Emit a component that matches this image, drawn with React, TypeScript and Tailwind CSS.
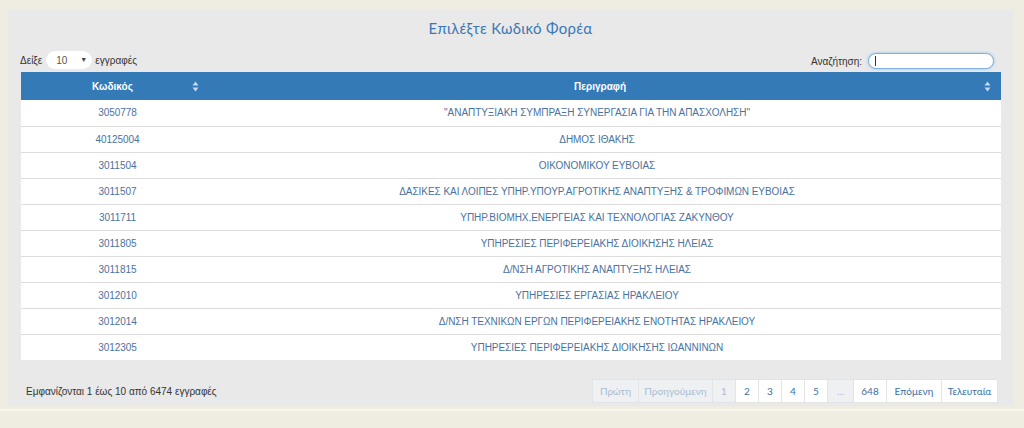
import React from 'react';

const rows: [string, string][] = [
  ['3050778', '"ΑΝΑΠΤΥΞΙΑΚΗ ΣΥΜΠΡΑΞΗ ΣΥΝΕΡΓΑΣΙΑ ΓΙΑ ΤΗΝ ΑΠΑΣΧΟΛΗΣΗ"'],
  ['40125004', 'ΔΗΜΟΣ ΙΘΑΚΗΣ'],
  ['3011504', 'ΟΙΚΟΝΟΜΙΚΟΥ ΕΥΒΟΙΑΣ'],
  ['3011507', 'ΔΑΣΙΚΕΣ ΚΑΙ ΛΟΙΠΕΣ ΥΠΗΡ.ΥΠΟΥΡ.ΑΓΡΟΤΙΚΗΣ ΑΝΑΠΤΥΞΗΣ & ΤΡΟΦΙΜΩΝ ΕΥΒΟΙΑΣ'],
  ['3011711', 'ΥΠΗΡ.ΒΙΟΜΗΧ.ΕΝΕΡΓΕΙΑΣ ΚΑΙ ΤΕΧΝΟΛΟΓΙΑΣ ΖΑΚΥΝΘΟΥ'],
  ['3011805', 'ΥΠΗΡΕΣΙΕΣ ΠΕΡΙΦΕΡΕΙΑΚΗΣ ΔΙΟΙΚΗΣΗΣ ΗΛΕΙΑΣ'],
  ['3011815', 'Δ/ΝΣΗ ΑΓΡΟΤΙΚΗΣ ΑΝΑΠΤΥΞΗΣ ΗΛΕΙΑΣ'],
  ['3012010', 'ΥΠΗΡΕΣΙΕΣ ΕΡΓΑΣΙΑΣ ΗΡΑΚΛΕΙΟΥ'],
  ['3012014', 'Δ/ΝΣΗ ΤΕΧΝΙΚΩΝ ΕΡΓΩΝ ΠΕΡΙΦΕΡΕΙΑΚΗΣ ΕΝΟΤΗΤΑΣ ΗΡΑΚΛΕΙΟΥ'],
  ['3012305', 'ΥΠΗΡΕΣΙΕΣ ΠΕΡΙΦΕΡΕΙΑΚΗΣ ΔΙΟΙΚΗΣΗΣ ΙΩΑΝΝΙΝΩΝ'],
];

const pages: { label: string; w: string; disabled?: boolean }[] = [
  { label: 'Πρώτη', w: 'w-[47px]', disabled: true },
  { label: 'Προηγούμενη', w: 'w-[75px]', disabled: true },
  { label: '1', w: 'w-[24px]', disabled: true },
  { label: '2', w: 'w-[24px]' },
  { label: '3', w: 'w-[24px]' },
  { label: '4', w: 'w-[24px]' },
  { label: '5', w: 'w-[24px]' },
  { label: '...', w: 'w-[27px]', disabled: true },
  { label: '648', w: 'w-[34px]' },
  { label: 'Επόμενη', w: 'w-[56px]' },
  { label: 'Τελευταία', w: 'w-[57px]' },
];

function SortIcon() {
  return (
    <svg width="7" height="11" viewBox="0 0 7 11" className="shrink-0">
      <path d="M3.5 0.5 L6.5 4.5 H0.5 Z" fill="#c9d8ea" />
      <path d="M3.5 10.5 L6.5 6.5 H0.5 Z" fill="#c9d8ea" />
    </svg>
  );
}

export default function App() {
  return (
    <div className="w-[1024px] h-[428px] bg-[#efede1] overflow-hidden font-['Liberation_Sans',Arial,sans-serif]">
      <div className="pt-[10px] pl-[8px] pr-[11px]">
        <div className="h-[396px] bg-[#e9e9e9] pt-[8px] px-[13px]">
          <h1 className="text-center text-[15px] leading-[20px] text-[#3a78b5] font-['Lato',sans-serif] tracking-[0.3px]">
            Επιλέξτε Κωδικό Φορέα
          </h1>

          <div className="flex items-end justify-between mt-[12px] h-[22px] pb-[3px]">
            <div className="flex items-center text-[10px] text-[#333] -ml-px">
              <span>Δείξε</span>
              <div className="ml-[4px] mr-[3px] w-[46px] h-[18px] bg-white rounded-[9px] flex items-center justify-between pl-[10px] pr-[5px] text-[10px] text-[#555]">
                <span>10</span>
                <span className="text-[7px] text-[#444]">▼</span>
              </div>
              <span>εγγραφές</span>
            </div>
            <div className="flex items-center text-[10px] text-[#333] mr-[6px]">
              <span>Αναζήτηση:</span>
              <div className="ml-[6px] w-[126px] h-[16px] bg-white rounded-[8px] border border-[#7fb2e0] shadow-[0_0_3px_rgba(82,168,236,0.6)] flex items-center pl-[6px]">
                <span className="w-px h-[10px] bg-[#333]" />
              </div>
            </div>
          </div>

          <table className="w-[980px] border-collapse table-fixed">
            <thead>
              <tr className="bg-[#337ab7] h-[28px] text-white text-[10px] font-bold">
                <th className="w-[188px] px-[10px]">
                  <div className="flex items-center justify-between pl-[61px]">
                    <span>Κωδικός</span>
                    <SortIcon />
                  </div>
                </th>
                <th className="px-[10px]">
                  <div className="flex items-center justify-between pl-[355px]">
                    <span>Περιγραφή</span>
                    <SortIcon />
                  </div>
                </th>
              </tr>
            </thead>
            <tbody className="bg-white">
              {rows.map(([code, desc], i) => (
                <tr key={code} className={`h-[26px] text-[10px] tracking-[-0.05px] text-[#4a72a0] ${i > 0 ? 'border-t border-[#dddddd]' : ''}`}>
                  <td className="text-center pl-[5px]">{code}</td>
                  <td className="text-center pr-[16px]">{desc}</td>
                </tr>
              ))}
            </tbody>
          </table>

          <div className="flex items-center justify-between mt-[19px]">
            <span className="pl-[5px] text-[10px] text-[#333]">Εμφανίζονται 1 έως 10 από 6474 εγγραφές</span>
            <div className="flex mr-[2px] font-['Lato',sans-serif]">
              {pages.map((p) => (
                <div
                  key={p.label}
                  className={`${p.w} h-[24px] -ml-px first:ml-0 flex items-center justify-center text-[10px] ${
                    p.disabled
                      ? 'bg-[#eef0f2] text-[#a9bdd3] border border-[#e1e4e8]'
                      : 'bg-white text-[#3a6fa6] border border-[#e4e4e4]'
                  }`}
                >
                  {p.label}
                </div>
              ))}
            </div>
          </div>
        </div>
        <div className="h-[3px]" />
        <div className="h-[2px] bg-[#f8f7ee] -ml-[8px] mr-[-11px]" />
      </div>
    </div>
  );
}
